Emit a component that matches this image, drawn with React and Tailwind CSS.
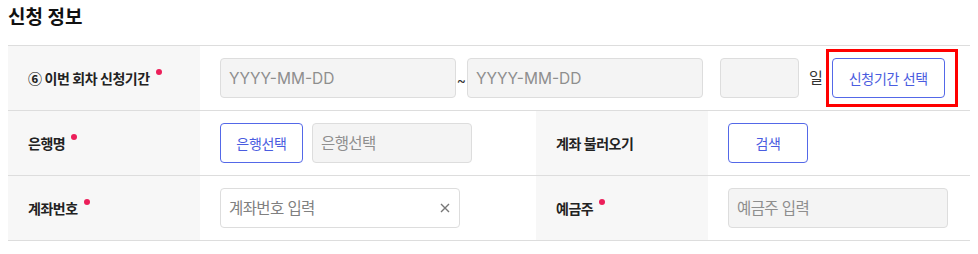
import { useState } from 'react';

const font = { fontFamily: 'Inter, "Noto Sans CJK KR", "Noto Sans", sans-serif' };

const Required = () => (
    <span className="inline-block w-[6px] h-[6px] rounded-full bg-[#ec1f5a] ml-[6px] -translate-y-[6px]" />
);

const Label = ({ children, required }) => (
    <div className="flex items-center bg-[#f7f7f7] text-[14px] font-semibold text-[#222] pl-[20px] tracking-[-0.5px]">
        <span>{children}</span>
        {required && <Required />}
    </div>
);

const GrayInput = ({ placeholder, className }) => (
    <input
        readOnly
        placeholder={placeholder}
        className={`h-[40px] rounded-[4px] border border-[#dddddd] bg-[#f4f4f4] px-[8px] text-[15.5px] text-[#333] placeholder:text-[#8e8e8e] outline-none ${className}`}
    />
);

const OutlineButton = ({ children, className }) => (
    <button className={`h-[40px] rounded-[4px] border border-[#5468e8] bg-white text-[14px] text-[#4a5ce0] tracking-[-0.3px] ${className}`}>
        {children}
    </button>
);

export default function App() {
    const [account, setAccount] = useState('');

    return (
        <div className="px-[8px] pt-[4px] bg-white" style={font}>
            <h2 className="text-[19px] font-bold text-[#111] leading-[28px] mb-[13px]">신청 정보</h2>

            <div className="border-t border-[#dddddd]">
                {/* row 1 */}
                <div className="grid grid-cols-[192px_1fr] h-[65px] border-b border-[#dddddd]">
                    <Label required>
                        <span className="font-['Noto_Sans_CJK_KR']">⑥</span> 이번 회차 신청기간
                    </Label>
                    <div className="flex items-center pl-[20px]">
                        <GrayInput placeholder="YYYY-MM-DD" className="w-[236px]" />
                        <span className="w-[11px] text-center text-[14px] text-[#333] pt-[2px]">~</span>
                        <GrayInput placeholder="YYYY-MM-DD" className="w-[236px]" />
                        <GrayInput className="w-[79px] ml-[17px]" />
                        <span className="ml-[10px] text-[15px] text-[#333]">일</span>
                        <div className="relative ml-[9px]">
                            <OutlineButton className="w-[113px]">신청기간 선택</OutlineButton>
                            <span className="absolute left-[-6px] top-[-9px] w-[132px] h-[58px] border-[3px] border-[#ff0000] pointer-events-none" />
                        </div>
                    </div>
                </div>

                {/* row 2 */}
                <div className="grid grid-cols-[192px_336px_172px_1fr] h-[65px] border-b border-[#dddddd]">
                    <Label required>은행명</Label>
                    <div className="flex items-center pl-[20px] gap-[9px]">
                        <OutlineButton className="w-[83px]">은행선택</OutlineButton>
                        <GrayInput placeholder="은행선택" className="w-[160px] tracking-[-0.6px]" />
                    </div>
                    <Label>계좌 불러오기</Label>
                    <div className="flex items-center pl-[20px]">
                        <OutlineButton className="w-[80px]">검색</OutlineButton>
                    </div>
                </div>

                {/* row 3 */}
                <div className="grid grid-cols-[192px_336px_172px_1fr] h-[65px] border-b border-[#dddddd]">
                    <Label required>계좌번호</Label>
                    <div className="flex items-center pl-[20px]">
                        <div className="relative w-[240px] h-[40px]">
                            <input
                                value={account}
                                onChange={(e) => setAccount(e.target.value)}
                                placeholder="계좌번호 입력"
                                className="w-full h-full rounded-[4px] border border-[#dddddd] bg-white pl-[8px] pr-[30px] text-[15.5px] tracking-[-0.6px] text-[#333] placeholder:text-[#808080] outline-none"
                            />
                            <svg className="absolute right-[10px] top-[15px]" width="10" height="10" viewBox="0 0 10 10">
                                <path d="M1 1L9 9M9 1L1 9" stroke="#777" strokeWidth="1.4" />
                            </svg>
                        </div>
                    </div>
                    <Label required>예금주</Label>
                    <div className="flex items-center pl-[20px]">
                        <GrayInput placeholder="예금주 입력" className="w-[220px] tracking-[-0.6px]" />
                    </div>
                </div>
            </div>
        </div>
    );
}
